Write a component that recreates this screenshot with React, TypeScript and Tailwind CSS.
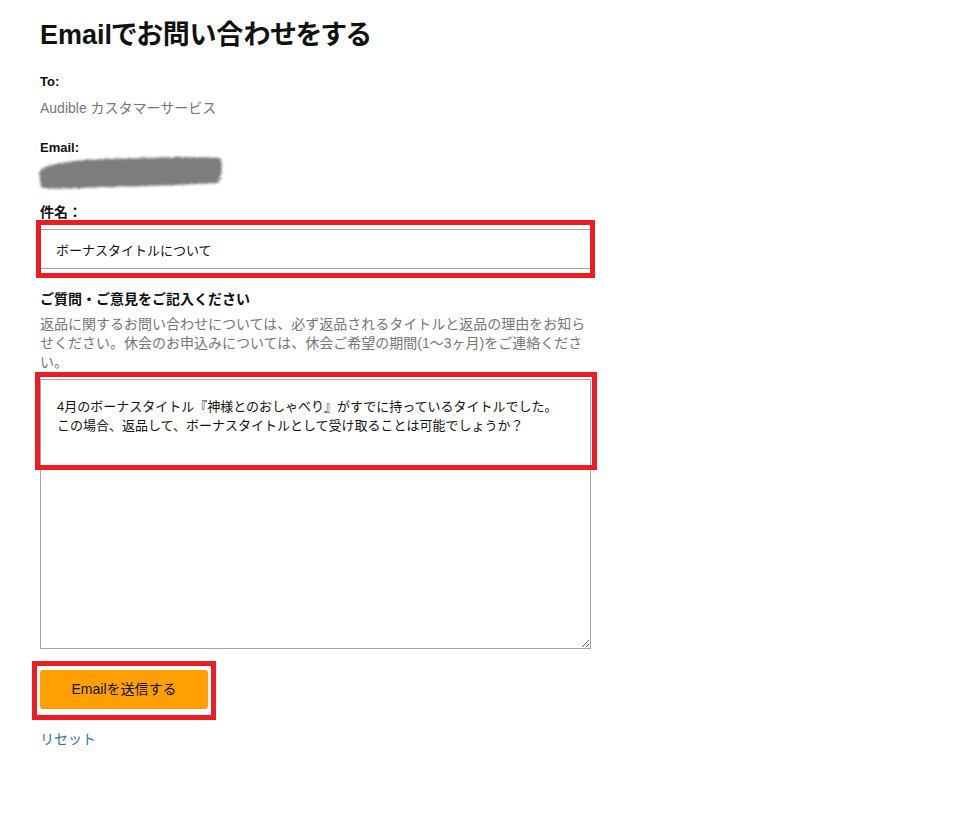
import React from 'react';

const font = "font-['Liberation_Sans','Noto_Sans_CJK_JP',sans-serif]";

// red annotation frame placed over a field
const Mark = ({ className }: { className: string }) => (
  <div className={`pointer-events-none absolute border-[5px] border-[#ed1c24] ${className}`} />
);

const Scribble = () => (
  <svg width="188" height="36" viewBox="0 0 188 36" className="block -ml-[3px]">
    <defs>
      <filter id="rough" x="-10%" y="-30%" width="120%" height="160%">
        <feTurbulence type="fractalNoise" baseFrequency="0.9" numOctaves="2" result="n" />
        <feDisplacementMap in="SourceGraphic" in2="n" scale="5" />
        <feGaussianBlur stdDeviation="0.9" />
      </filter>
    </defs>
    <path
      d="M4 14 C20 5 60 4 100 3 C140 2 170 1 184 4 C186 12 185 21 181 28 C150 30 110 31 70 32 C40 33 18 34 5 33 C2 27 2 19 4 14 Z"
      fill="#7d7d7d"
      filter="url(#rough)"
    />
  </svg>
);

export default function App() {
  return (
    <div className={`min-h-screen bg-white ${font} text-[#111]`}>
      <div className="w-[551px] ml-[40px] pt-[18px]">
        <h1 className="text-[27px] leading-[34px] font-bold [font-feature-settings:'palt']">
          Emailでお問い合わせをする
        </h1>

        <div className="mt-[20px] text-[13px] leading-[19px] font-bold">To:</div>
        <div className="mt-[7px] text-[14px] leading-[20px] text-[#767676]">Audible カスタマーサービス</div>

        <div className="mt-[20px] text-[13px] leading-[19px] font-bold">Email:</div>
        <div className="-mt-[2px]">
          <Scribble />
        </div>

        <div className="mt-[12px] text-[14px] leading-[19px] font-bold">件名：</div>
        <div className="relative mt-[7px]">
          <input
            defaultValue="ボーナスタイトルについて"
            className={`block h-[40px] w-full border border-[#a6a6a6] bg-white px-[15px] text-[13px] text-[#111] outline-none ${font}`}
          />
          <Mark className="-left-[4px] -right-[4px] -top-[9px] -bottom-[9px]" />
        </div>

        <div className="mt-[20px] text-[14px] leading-[20px] font-bold">ご質問・ご意見をご記入ください</div>
        <p className="mt-[6px] text-[14px] leading-[19px] text-[#767676]">
          返品に関するお問い合わせについては、必ず返品されるタイトルと返品の理由をお知らせください。休会のお申込みについては、休会ご希望の期間(1〜3ヶ月)をご連絡ください。
        </p>

        <div className="relative mt-[7px]">
          <textarea
            defaultValue={'4月のボーナスタイトル『神様とのおしゃべり』がすでに持っているタイトルでした。\nこの場合、返品して、ボーナスタイトルとして受け取ることは可能でしょうか？'}
            className={`block h-[270px] w-full border border-[#a6a6a6] bg-white px-[16px] pt-[17px] text-[13px] leading-[19px] text-[#111] outline-none ${font}`}
          />
          <Mark className="-left-[5px] -right-[6px] -top-[7px] h-[98px]" />
        </div>

        <div className="relative mt-[21px] w-[168px]">
          <button
            className={`block h-[39px] w-full rounded-[3px] bg-[#ffa000] text-[14px] text-[#111] ${font}`}
          >
            Emailを送信する
          </button>
          <Mark className="-left-[8px] -right-[8px] -top-[9px] -bottom-[11px]" />
        </div>

        <a href="#" className="mt-[20px] block text-[14px] leading-[20px] text-[#2f6fb5]">
          リセット
        </a>
      </div>
    </div>
  );
}
